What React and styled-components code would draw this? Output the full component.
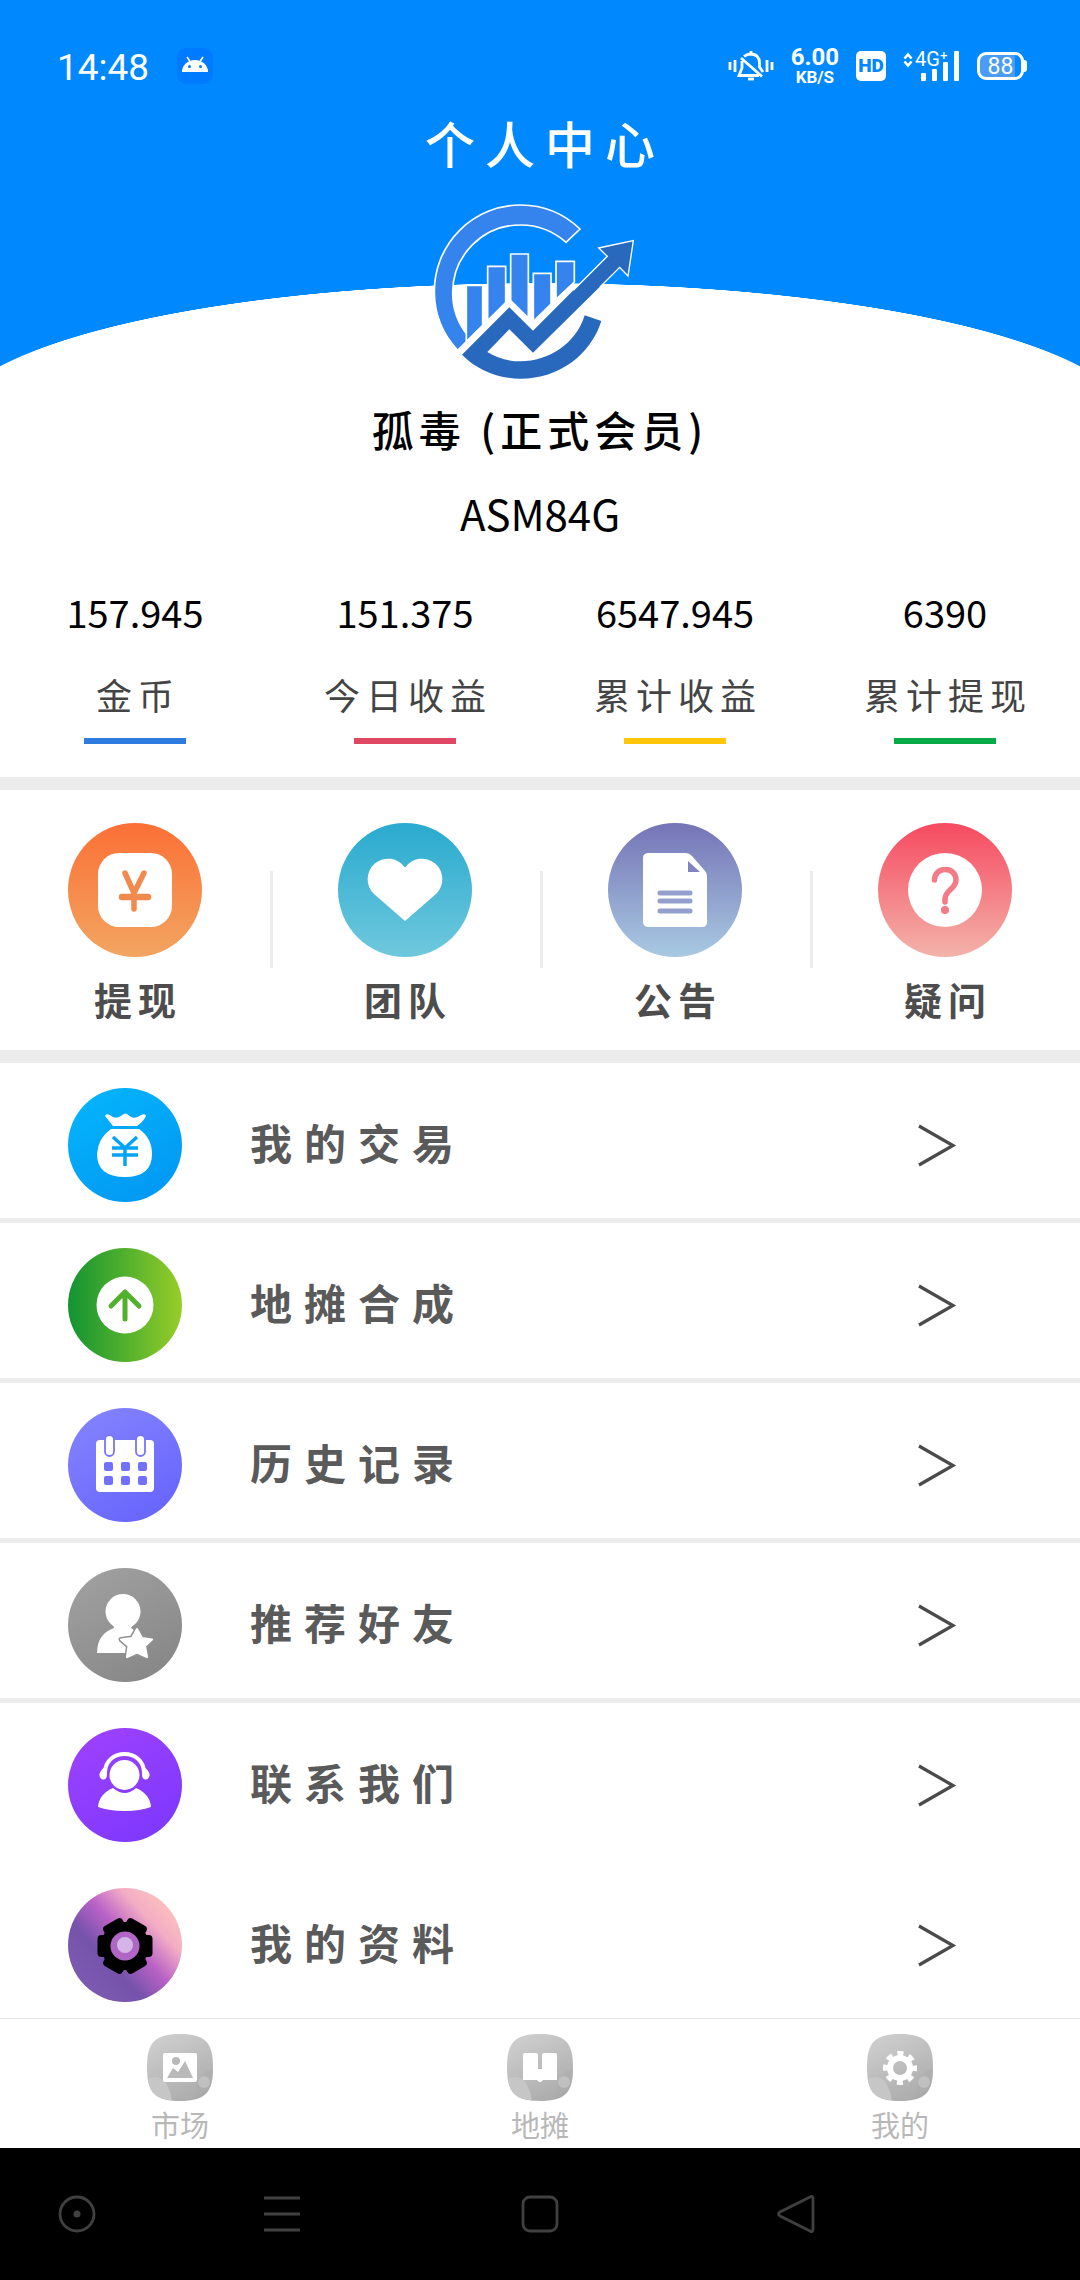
import React from "react";
import styled, { createGlobalStyle } from "styled-components";

const GlobalStyle = createGlobalStyle`
  *, *::before, *::after { box-sizing: border-box; }
  body {
    margin: 0;
    background: #fff;
    font-family: "Noto Sans CJK SC", "Noto Sans", sans-serif;
  }
  svg { display: block; }
`;

const Page = styled.div`
  min-height: 100vh;
  display: flex;
  flex-direction: column;
  background: #fff;
`;

/* ---------- status bar ---------- */

const StatusBar = styled.div`
  display: flex;
  align-items: center;
  justify-content: space-between;
  height: 36px;
  margin-top: 48px;
  padding: 0 56px 0 57px;
  color: #fff;
  font-family: Roboto, sans-serif;
`;

const StatusLeft = styled.div`
  display: flex;
  align-items: center;
  gap: 28px;
`;

const StatusRight = styled.div`
  display: flex;
  align-items: center;
  gap: 17px;
`;

const Clock = styled.time`
  padding-top: 4px;
  font-size: 37px;
  line-height: 36px;
`;

const NetSpeed = styled.div`
  display: flex;
  flex-direction: column;
  align-items: center;
  font-weight: 700;
`;

const SpeedValue = styled.span`
  font-size: 24px;
  line-height: 22px;
`;

const SpeedUnit = styled.span`
  font-size: 17px;
  line-height: 18px;
`;

const HdBadge = styled.span`
  width: 30px;
  height: 30px;
  border-radius: 5px;
  background: #fff;
  color: #0089ff;
  font-size: 19px;
  font-weight: 900;
  line-height: 30px;
  text-align: center;
`;

const Signal = styled.div`
  position: relative;
  width: 57px;
  height: 30px;
`;

const SignalType = styled.span`
  position: absolute;
  left: 12px;
  top: -4px;
  font-size: 20px;
  line-height: 24px;
`;

const Battery = styled.div`
  position: relative;
  width: 47px;
  height: 28px;
  border: 3px solid #fff;
  border-radius: 9px;
  background: linear-gradient(90deg, #4a9cf5 86%, #0089ff 86%);
  font-size: 23px;
  line-height: 23px;
  text-align: center;

  &::after {
    content: "";
    position: absolute;
    right: -6px;
    top: 5px;
    width: 4px;
    height: 12px;
    border-radius: 0 3px 3px 0;
    background: #fff;
  }
`;

/* ---------- header and profile ---------- */

const Header = styled.header`
  display: flex;
  flex-direction: column;
  background: radial-gradient(ellipse 55% 142px at 50% 425px, #fff 99.7%, #0089ff 100%)
    no-repeat top / 100% 370px;
`;

const Title = styled.h1`
  margin: 28px 0 0;
  padding-left: 10px;
  color: #fff;
  font-size: 50px;
  font-weight: 500;
  line-height: 60px;
  letter-spacing: 10px;
  text-align: center;
`;

const LogoBox = styled.div`
  display: flex;
  justify-content: center;
  margin-top: 31px;
`;

const Name = styled.h2`
  margin: 24px 0 0;
  color: #000;
  font-size: 42px;
  font-weight: 500;
  line-height: 50px;
  letter-spacing: 5px;
  text-align: center;
`;

const Code = styled.p`
  margin: 34px 0 0;
  color: #000;
  font-size: 42px;
  line-height: 50px;
  text-align: center;
`;

const Stats = styled.section`
  display: grid;
  grid-template-columns: repeat(4, 1fr);
  padding: 54px 0 33px;
`;

const Stat = styled.div`
  display: flex;
  flex-direction: column;
  align-items: center;
`;

const StatValue = styled.span`
  color: #000;
  font-size: 38px;
  line-height: 40px;
`;

const StatLabel = styled.span`
  margin-top: 42px;
  padding-left: 6px;
  color: #444;
  font-size: 36px;
  line-height: 40px;
  letter-spacing: 6px;
  white-space: nowrap;
`;

const StatBar = styled.span`
  width: 102px;
  height: 6px;
  margin-top: 24px;
  background: ${(p) => p.$color};
`;

const Band = styled.div`
  height: 13px;
  background: #ececec;
`;

/* ---------- quick actions ---------- */

const Quick = styled.nav`
  display: grid;
  grid-template-columns: repeat(4, 1fr);
  padding: 33px 0 28px;
`;

const QuickItem = styled.a`
  position: relative;
  display: flex;
  flex-direction: column;
  align-items: center;
  color: #4d4d4d;
  text-decoration: none;

  & + &::before {
    content: "";
    position: absolute;
    left: 0;
    top: 48px;
    width: 3px;
    height: 97px;
    background: #ececec;
  }
`;

const QuickLabel = styled.span`
  margin-top: 19px;
  padding-left: 6px;
  font-size: 38px;
  font-weight: 700;
  line-height: 46px;
  letter-spacing: 6px;
`;

/* ---------- menu ---------- */

const Menu = styled.nav`
  flex: 1;
  display: flex;
  flex-direction: column;
`;

const Row = styled.a`
  display: flex;
  align-items: center;
  height: 160px;
  padding: 8px 123px 0 68px;
  border-bottom: 5px solid ${(p) => (p.$plain ? "transparent" : "#ececec")};
  color: #5a5a5a;
  text-decoration: none;

  &:last-child {
    height: 155px;
    border-bottom: 0;
  }
`;

const RowLabel = styled.span`
  flex: 1;
  margin-left: 68px;
  padding-bottom: 6px;
  font-size: 42px;
  font-weight: 700;
  line-height: 50px;
  letter-spacing: 12px;
`;

/* ---------- bottom bars ---------- */

const Tabs = styled.nav`
  display: grid;
  grid-template-columns: repeat(3, 1fr);
  height: 130px;
  padding-top: 15px;
  border-top: 1px solid #e4e4e4;
`;

const Tab = styled.a`
  display: flex;
  flex-direction: column;
  align-items: center;
  color: #b8b8b8;
  font-size: 29px;
  line-height: 36px;
  text-decoration: none;
`;

const TabLabel = styled.span`
  margin-top: 5px;
`;

const SystemNav = styled.div`
  display: grid;
  grid-template-columns: 154fr 256fr 260fr 252fr 158fr;
  align-items: center;
  height: 132px;
  background: #000;
`;

const SystemButton = styled.button`
  display: flex;
  justify-content: center;
  padding: 0;
  border: 0;
  background: none;
  color: #404040;
`;

/* ---------- drawings ---------- */

const AndroidIcon = () => (
  <svg width="36" height="36" viewBox="0 0 36 36">
    <rect width="36" height="36" rx="9" fill="#007bff" />
    <path d="M5 24a13 12 0 0 1 26 0z" fill="#fff" />
    <path d="M10 9l4 6M26 9l-4 6" stroke="#fff" strokeWidth="1.6" />
    <circle cx="12.500" cy="18.500" r="1.500" fill="#007bff" />
    <circle cx="23.500" cy="18.500" r="1.500" fill="#007bff" />
  </svg>
);

const MuteIcon = () => (
  <svg width="46" height="30" viewBox="0 0 46 30" fill="none" stroke="#fff" strokeWidth="2.800">
    <path d="M2 11v8M7 9v12M39 9v12M44 11v8" />
    <path d="M16 5.500Q19 3 23 3Q31.500 3.500 31.500 12V16L35 21" />
    <path d="M14 10V17L11 24.500H31" />
    <path d="M13 7L34 25.500" />
    <path d="M23 0v4" />
    <path d="M20 28h6" />
  </svg>
);

const SignalBars = () => (
  <svg width="57" height="30" viewBox="0 0 57 30" fill="#fff">
    <path d="M1.500 7.500L5 3.500l3.500 4M1.500 10.500L5 14.500l3.500-4" fill="none" stroke="#fff" strokeWidth="2.600" />
    <rect x="18" y="22" width="5" height="8" rx="1" />
    <rect x="29" y="18" width="5" height="12" rx="1" />
    <rect x="40" y="11" width="5" height="19" rx="1" />
    <rect x="51" y="0" width="5" height="30" rx="1" />
  </svg>
);

const Logo = () => (
  <svg width="216" height="177" viewBox="96 69 648 531" role="img" aria-label="logo">
    <g stroke="#fff" strokeWidth="5" strokeLinejoin="miter">
      <path
        d="M173 511A259 259 0 0 1 103 334A259 259 0 0 1 362 75A259 259 0 0 1 540 147L498 187A205 205 0 0 0 362 135A203 203 0 0 0 158 338A205 205 0 0 0 203 466L210 474Z"
        fill="#3583ec"
      />
      <path d="M199 316H248V436L199 485Z" fill="#3583ec" />
      <path d="M263 259H317V368L263 422Z" fill="#3583ec" />
      <path d="M332 222H385V414L332 362Z" fill="#3583ec" />
      <path d="M400 280H453V372L400 424Z" fill="#3583ec" />
      <path d="M468 244H523V306L468 358Z" fill="#3583ec" />
    </g>
    <path d="M176 525L328 372L399 442L518 324" fill="none" stroke="#fff" strokeWidth="18" />
    <path
      d="M186 524L328 382L399 452L622 229L596 204L700 182L684 288L659 262L399 518L328 448L262 516Q307 544 362 544C445 544 528 492 554 406L604 423C572 524 478 596 362 596C294 596 230 569 186 524Z"
      fill="#2869bd"
    />
    <path d="M520 331L622 229L596 204L700 182L684 288L659 262L600 321" fill="none" stroke="#fff" strokeWidth="4" />
  </svg>
);

const Disc = ({ id, size, stops, dir = [0, 0, 0, 1], children }) => (
  <svg width={size} height={size} viewBox={`0 0 ${size} ${size}`}>
    <defs>
      <linearGradient id={id} x1={dir[0]} y1={dir[1]} x2={dir[2]} y2={dir[3]}>
        {stops.map((c, i) => (
          <stop key={c} offset={i / (stops.length - 1)} stopColor={c} />
        ))}
      </linearGradient>
    </defs>
    <circle cx={size / 2} cy={size / 2} r={size / 2} fill={`url(#${id})`} />
    {children}
  </svg>
);

const WithdrawIcon = () => (
  <Disc id="withdraw" size={134} stops={["#fb7036", "#f2a561"]}>
    <rect x="30" y="30" width="74" height="74" rx="21" fill="#fff" />
    <path d="M57 50L66 70L76 50M66 70V86" fill="none" stroke="#f38a4d" strokeWidth="5.500" strokeLinecap="round" />
    <path d="M54 74H80" stroke="#f38a4d" strokeWidth="6.500" strokeLinecap="round" />
  </Disc>
);

const TeamIcon = () => (
  <Disc id="team" size={134} stops={["#29aacf", "#6fc8dd"]}>
    <path d="M67 98L36 71A20.500 20.500 0 1 1 67 44.500A20.500 20.500 0 1 1 98 71Z" fill="#fff" />
  </Disc>
);

const NoticeIcon = () => (
  <Disc id="notice" size={134} stops={["#7574b6", "#a8c9e2"]}>
    <path d="M41 30H78Q81 30 84 33L97 48Q99 50 99 53V99Q99 104 94 104H41Q35 104 35 99V35Q35 30 41 30Z" fill="#fff" />
    <path d="M80 38V49H92Z" fill="#7f83be" />
    <path d="M52 70H82M52 78H82M52 88H82" stroke="#93a0cd" strokeWidth="5" strokeLinecap="round" />
  </Disc>
);

const QuestionIcon = () => (
  <Disc id="question" size={134} stops={["#f64a60", "#f3b3aa"]}>
    <circle cx="67" cy="67" r="37" fill="#fff" />
    <path
      d="M56.500 57C56.500 43 78 43 78 57C78 66 67 67 67 76V79"
      fill="none"
      stroke="#f27b85"
      strokeWidth="5.500"
      strokeLinecap="round"
    />
    <circle cx="67" cy="87" r="4" fill="#f27b85" />
  </Disc>
);

const TradeIcon = () => (
  <Disc id="trade" size={114} stops={["#04b4fb", "#0297f3"]} dir={[0.2, 0, 0.8, 1]}>
    <path d="M45 38Q41 33 37 28Q38 25 42 27Q46 31 51 29L56 26Q57 25 59 26L63 29Q68 31 73 27Q77 25 78 28Q75 34 69 38Z" fill="#fff" />
    <path d="M43 41H71Q84 50 84 66Q84 89 57 89Q29 89 29 66Q30 50 43 41Z" fill="#fff" />
    <path d="M45 49L57 60L69 49M44 60H70M44 67H70M57 60V78" fill="none" stroke="#03a4f6" strokeWidth="3.500" />
  </Disc>
);

const MergeIcon = () => (
  <Disc id="merge" size={114} stops={["#129333", "#52b02d", "#98cd29"]} dir={[0, 0, 1, 0]}>
    <circle cx="57" cy="57" r="28.500" fill="#fff" />
    <path d="M57 71V44M43 58L57 44L71 58" fill="none" stroke="#52b02d" strokeWidth="5" strokeLinecap="round" strokeLinejoin="round" />
  </Disc>
);

const HistoryIcon = () => (
  <Disc id="history" size={114} stops={["#8383fe", "#6664fc"]} dir={[0.2, 0, 0.8, 1]}>
    <rect x="28" y="32" width="58" height="52" rx="4" fill="#fff" />
    {[37, 68].map((x) => (
      <rect key={x} x={x} y="27" width="9" height="21" rx="4.500" fill="#fff" stroke="#7775fd" strokeWidth="1.800" />
    ))}
    {[36, 53, 70].map((x) =>
      [54, 68].map((y) => <rect key={`${x}-${y}`} x={x} y={y} width="9" height="9" rx="2" fill="#7271fd" />)
    )}
  </Disc>
);

const FriendIcon = () => (
  <Disc id="friend" size={114} stops={["#a0a0a0", "#868686"]} dir={[0.2, 0, 0.8, 1]}>
    <circle cx="55" cy="43.500" r="17.500" fill="#fff" />
    <path d="M29 85Q29 66 46 60L45 56H65L63 60L70 65V85Z" fill="#fff" />
    <path
      d="M69 61L74 70L84 71.500L77 78L79 89L69 84.500L59 89L60.500 78L53 71.500L64 70Z"
      fill="#fff"
      stroke="#919191"
      strokeWidth="5"
      strokeLinejoin="round"
    />
    <path
      d="M69 61L74 70L84 71.500L77 78L79 89L69 84.500L59 89L60.500 78L53 71.500L64 70Z"
      fill="#fff"
      stroke="#fff"
      strokeWidth="2"
      strokeLinejoin="round"
    />
  </Disc>
);

const ContactIcon = () => (
  <Disc id="contact" size={114} stops={["#9d41fe", "#7d38fd"]} dir={[0.2, 0, 0.8, 1]}>
    <circle cx="56.500" cy="47" r="15" fill="#fff" />
    <path d="M37 44C38 20 75 20 76 44" fill="none" stroke="#fff" strokeWidth="4" />
    <path d="M37 39Q31 43 31.500 48Q33 52 36 51.500Q39 51 39 46V39ZM76 39Q82 43 81.500 48Q80 52 77 51.500Q74 51 74 46V39Z" fill="#fff" />
    <path d="M45 60Q57 70 68 60Q82 66 83 79Q72 83 57 83Q41 83 30 79Q31 66 45 60Z" fill="#fff" />
  </Disc>
);

const ProfileIcon = () => (
  <Disc id="profile" size={114} stops={["#ffc4be", "#f3adc4", "#b962c6", "#7653ab", "#7b59b0"]} dir={[0.9, 0.1, 0.15, 0.8]}>
    <g transform="translate(57 58)">
      <circle r="24" />
      {[0, 60, 120].map((a) => (
        <rect key={a} x="-27.500" y="-11" width="55" height="22" rx="4" transform={`rotate(${a})`} />
      ))}
      <circle r="14.500" fill="#b066c4" />
      <circle r="8" cy="-1" fill="#d5b4e6" />
    </g>
  </Disc>
);

const Chevron = () => (
  <svg width="40" height="44" viewBox="0 0 40 44">
    <path d="M2 3L36 22.500L2 42" fill="none" stroke="#4a4a4a" strokeWidth="3.200" />
  </svg>
);

const TabTile = ({ id, children }) => (
  <svg width="66" height="67" viewBox="0 0 66 67">
    <defs>
      <linearGradient id={id} x1="0.200" y1="0" x2="0.700" y2="1">
        <stop offset="0" stopColor="#cfcfcf" />
        <stop offset="1" stopColor="#ababab" />
      </linearGradient>
      <clipPath id={`${id}-clip`}>
        <path d="M33 0C58 0 66 8 66 33.500S58 67 33 67S0 59 0 33.500S8 0 33 0Z" />
      </clipPath>
    </defs>
    <g clipPath={`url(#${id}-clip)`}>
      <rect width="66" height="67" fill={`url(#${id})`} />
      <path d="M0 45Q20 36 25 67H0Z" fill="#c6c6c6" />
      <path d="M50 48Q53 38 66 35V67H48Z" fill="#a9a9a9" opacity="0.400" />
      <circle cx="57" cy="48" r="6" fill="#c0c0c0" />
    </g>
    {children}
  </svg>
);

const MarketIcon = () => (
  <TabTile id="tile-market">
    <rect x="16" y="19" width="34" height="29" rx="2" fill="#fff" />
    <circle cx="29" cy="27" r="4" fill="#b9b9b9" />
    <path d="M20 44L26 34L31 38L38 27L46 44Z" fill="#b9b9b9" />
  </TabTile>
);

const StallIcon = () => (
  <TabTile id="tile-stall">
    <path d="M18 19H29Q31 19 31 21V35H35V21Q35 19 37 19H48Q50 19 50 21V46H36Q33 50 30 46H16V21Q16 19 18 19Z" fill="#fff" />
  </TabTile>
);

const MineIcon = () => (
  <TabTile id="tile-mine">
    <g transform="translate(33 34)" fill="none" stroke="#fff">
      <circle r="10" strokeWidth="6" />
      <circle r="14.500" strokeWidth="5" strokeDasharray="6 5.388" strokeDashoffset="3" />
    </g>
  </TabTile>
);

/* ---------- data ---------- */

const stats = [
  { value: "157.945", label: "金币", color: "#2e7cdf" },
  { value: "151.375", label: "今日收益", color: "#e04763" },
  { value: "6547.945", label: "累计收益", color: "#ffc60a" },
  { value: "6390", label: "累计提现", color: "#05aa46" },
];

const quickActions = [
  { label: "提现", Icon: WithdrawIcon },
  { label: "团队", Icon: TeamIcon },
  { label: "公告", Icon: NoticeIcon },
  { label: "疑问", Icon: QuestionIcon },
];

const menu = [
  { label: "我的交易", Icon: TradeIcon },
  { label: "地摊合成", Icon: MergeIcon },
  { label: "历史记录", Icon: HistoryIcon },
  { label: "推荐好友", Icon: FriendIcon },
  { label: "联系我们", Icon: ContactIcon, plain: true },
  { label: "我的资料", Icon: ProfileIcon, plain: true },
];

const tabs = [
  { label: "市场", Icon: MarketIcon },
  { label: "地摊", Icon: StallIcon },
  { label: "我的", Icon: MineIcon },
];

const systemKeys = [
  {
    name: "辅助",
    art: (
      <>
        <circle cx="20" cy="20" r="17" />
        <circle cx="20" cy="20" r="3.500" fill="currentColor" stroke="none" />
      </>
    ),
  },
  { name: "菜单", art: <path d="M2 4H38M2 20H38M2 36H38" /> },
  { name: "主页", art: <rect x="3" y="3" width="34" height="34" rx="7" /> },
  { name: "返回", art: <path d="M34 3Q37 1 37 5V35Q37 39 34 37L4 22Q1 20 4 18Z" /> },
];

export default function App() {
  return (
    <Page>
      <GlobalStyle />
      <Header>
        <StatusBar>
          <StatusLeft>
            <Clock>14:48</Clock>
            <AndroidIcon />
          </StatusLeft>
          <StatusRight>
            <MuteIcon />
            <NetSpeed>
              <SpeedValue>6.00</SpeedValue>
              <SpeedUnit>KB/S</SpeedUnit>
            </NetSpeed>
            <HdBadge>HD</HdBadge>
            <Signal>
              <SignalBars />
              <SignalType>4G⁺</SignalType>
            </Signal>
            <Battery>88</Battery>
          </StatusRight>
        </StatusBar>
        <Title>个人中心</Title>
        <LogoBox>
          <Logo />
        </LogoBox>
        <Name>孤毒 (正式会员)</Name>
        <Code>ASM84G</Code>
      </Header>

      <Stats>
        {stats.map((s) => (
          <Stat key={s.label}>
            <StatValue>{s.value}</StatValue>
            <StatLabel>{s.label}</StatLabel>
            <StatBar $color={s.color} />
          </Stat>
        ))}
      </Stats>
      <Band />
      <Quick>
        {quickActions.map(({ label, Icon }) => (
          <QuickItem key={label} href="#">
            <Icon />
            <QuickLabel>{label}</QuickLabel>
          </QuickItem>
        ))}
      </Quick>
      <Band />
      <Menu>
        {menu.map(({ label, Icon, plain }) => (
          <Row key={label} href="#" $plain={plain}>
            <Icon />
            <RowLabel>{label}</RowLabel>
            <Chevron />
          </Row>
        ))}
      </Menu>

      <Tabs>
        {tabs.map(({ label, Icon }) => (
          <Tab key={label} href="#">
            <Icon />
            <TabLabel>{label}</TabLabel>
          </Tab>
        ))}
      </Tabs>
      <SystemNav>
        {systemKeys.map(({ name, art }) => (
          <SystemButton key={name} type="button" aria-label={name}>
            <svg width="40" height="40" viewBox="0 0 40 40" fill="none" stroke="currentColor" strokeWidth="2.800">
              {art}
            </svg>
          </SystemButton>
        ))}
      </SystemNav>
    </Page>
  );
}
